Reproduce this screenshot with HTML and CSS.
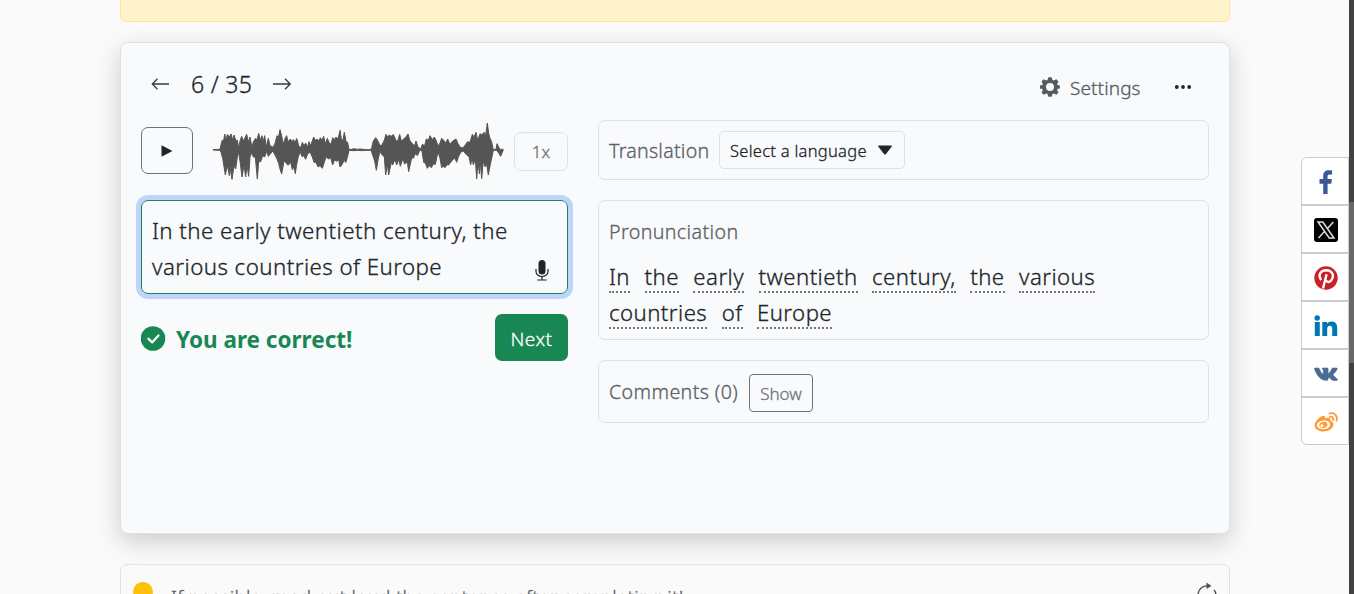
FILE: index.html
```
<!DOCTYPE html>
<html lang="en">
<head>
<meta charset="utf-8">
<title>Listening practice</title>
<link rel="stylesheet" href="styles.css">
</head>
<body>
<main class="page">
  <div class="alert"></div>
  <section class="card">
    <header class="toolbar">
      <nav class="pager">
        <svg class="arrow" width="20" height="14" viewBox="0 0 20 14"><path d="M19 7H2.500M7.500 1.800 2.300 7 7.500 12.200"/></svg>
        <span class="count">6 / 35</span>
        <svg class="arrow" width="20" height="14" viewBox="0 0 20 14"><path d="M0 7h17M12 1.800 17.200 7 12 12.200"/></svg>
      </nav>
      <div class="options">
        <svg width="20" height="20" viewBox="-10 -10 20 20"><path fill="#555a5f" fill-rule="evenodd" d="M-1.600-9.800h3.200l.9 2.800 1.200.5 2.600-1.300 2.200 2.200-1.300 2.600.5 1.200 2.200.2v3.200l-2.200.2-.5 1.200 1.300 2.600-2.200 2.200-2.600-1.300-1.200.5-.9 2.800h-3.200l-.9-2.800-1.200-.5-2.600 1.300-2.200-2.200 1.300-2.600-.5-1.200-2.800-.2v-3.200l2.800-.2.5-1.200-1.300-2.600 2.200-2.200 2.600 1.300 1.200-.5zM0-4A4 4 0 1 0 0 4 4 4 0 1 0 0-4z"/></svg>
        <span class="settings">Settings</span>
        <svg class="more" width="18" height="6" viewBox="0 0 18 6"><circle cx="2.800" cy="3" r="1.900"/><circle cx="9" cy="3" r="1.900"/><circle cx="15.200" cy="3" r="1.900"/></svg>
      </div>
    </header>
    <div class="columns">
      <div class="left">
        <div class="player">
          <button class="play"><svg width="12" height="12" viewBox="0 0 12 12"><path fill="#212529" d="M.5.3 11.500 6 .5 11.700z"/></svg></button>
          <svg class="wave" width="291" height="60" viewBox="249 18 873 180"><polygon fill="#555" stroke="#555" stroke-width="3" stroke-linejoin="bevel" points="249,104 270,103 274,85 277,75 281,78 284,57 289,75 292,58 298,66 303,57 308,75 312,60 318,78 322,75 326,100 330,78 335,64 340,78 345,68 350,58 355,80 360,66 366,98 370,80 377,70 381,75 386,55 391,75 396,62 400,80 404,62 409,96 415,70 420,92 430,97 436,82 441,62 445,68 450,44 455,62 460,88 466,68 470,62 474,80 481,72 486,80 490,74 496,82 500,70 506,92 512,98 517,82 522,92 527,84 533,96 537,80 541,92 547,78 551,66 556,76 561,72 566,78 571,68 576,76 581,64 586,86 592,70 597,82 603,88 608,68 613,74 618,66 624,72 630,46 634,72 639,76 643,52 648,80 653,82 657,104 665,103 672,101 680,103 690,102 700,103 705,104 722,104 725,98 730,78 737,68 743,76 750,92 756,90 763,75 768,58 773,66 778,60 784,64 790,58 796,72 802,82 809,58 814,78 821,72 828,66 834,57 840,78 847,86 854,92 858,78 864,96 872,102 877,88 884,92 889,72 895,76 900,62 907,74 913,66 919,78 924,94 930,84 935,70 941,76 947,84 953,72 960,88 968,78 978,72 984,86 992,98 1000,98 1007,88 1013,80 1020,82 1027,58 1032,66 1038,52 1043,76 1050,56 1056,60 1062,52 1067,60 1072,24 1076,55 1080,70 1084,78 1090,104 1098,103 1101,86 1107,98 1112,105 1117,102 1120,104 1117,112 1112,124 1106,114 1100,106 1090,106 1086,125 1081,148 1075,180 1070,148 1065,155 1060,138 1055,191 1051,142 1048,176 1044,138 1040,192 1036,132 1030,150 1026,128 1022,150 1017,125 1010,120 1000,108 992,112 985,126 980,142 975,130 968,134 962,142 956,150 951,149 945,158 940,154 935,158 930,130 924,110 916,148 910,147 904,158 898,152 892,160 886,144 881,142 876,108 870,105 862,122 856,116 850,130 845,128 836,170 832,140 824,147 818,132 811,154 806,134 800,150 795,133 788,150 784,142 776,180 772,148 767,180 763,126 755,118 750,109 745,130 739,166 734,138 728,120 723,106 705,106 695,107 685,106 670,107 657,106 653,124 647,143 643,134 636,149 630,156 626,134 620,139 614,134 608,150 602,128 595,132 588,125 583,142 577,160 570,152 564,156 558,142 552,142 547,126 540,112 533,116 527,133 521,122 516,125 511,110 505,125 500,148 496,176 491,155 487,164 482,142 474,151 468,143 462,138 455,177 450,162 446,145 440,130 434,118 428,108 415,124 410,109 404,126 398,122 392,140 386,140 382,192 376,127 370,126 365,113 360,126 356,184 351,150 347,186 342,150 336,186 330,138 326,112 322,126 317,162 312,152 306,193 300,155 298,182 292,150 286,180 282,155 278,130 273,112 270,106 249,105"/></svg>
          <button class="speed">1x</button>
        </div>
        <div class="answer">
          <div class="answer-text">In the early twentieth century, the<br>various countries of Europe</div>
          <svg class="mic" width="14" height="21" viewBox="0 0 14 21"><rect x="3.500" y="0" width="7" height="14.500" rx="3.500" fill="#212529"/><path d="M1 9v2.500a6 5 0 0 0 12 0V9M7 16.500v3M2.200 20h9.600" fill="none" stroke="#212529" stroke-width="1.200"/></svg>
        </div>
        <div class="result">
          <svg width="25" height="25" viewBox="0 0 25 25"><circle cx="12" cy="12.500" r="12.300" fill="#198754"/><path d="M7.500 12.800l3.800 3.500 6.200-6.800" fill="none" stroke="#fff" stroke-width="2.300" stroke-linecap="round" stroke-linejoin="round"/></svg>
          <strong class="correct">You are correct!</strong>
          <button class="next">Next</button>
        </div>
      </div>
      <div class="right">
        <div class="panel translation">
          <span class="label label-tr">Translation</span>
          <button class="select"><span>Select a language</span><svg width="14" height="10" viewBox="0 0 14 10"><path d="M1 .5h12q1.300.2.6 1.200L8 9Q7 10 6 9L.4 1.700Q-.3.7 1 .5z" fill="#212529"/></svg></button>
        </div>
        <div class="panel pronunciation">
          <div class="label label-pr">Pronunciation</div>
          <div class="words"><span class="w">In</span><span class="w">the</span><span class="w">early</span><span class="w">twentieth</span><span class="w">century,</span><span class="w">the</span><span class="w">various</span></div>
          <div class="words"><span class="w">countries</span><span class="w">of</span><span class="w">Europe</span></div>
        </div>
        <div class="panel comments">
          <span class="label label-co">Comments (0)</span>
          <button class="show">Show</button>
        </div>
      </div>
    </div>
  </section>
  <section class="tip">
    <svg width="20" height="26" viewBox="0 0 20 26"><path d="M10 0a9.800 9.800 0 0 1 6 17.500L14 21H6l-2-3.500A9.800 9.800 0 0 1 10 0zM6 22.500h8V25H6z" fill="#ffc107"/></svg>
    <span class="tip-text">If possible, read out loud the sentence after completing it!</span>
    <svg class="refresh" width="20" height="24" viewBox="0 0 20 24"><path d="M1 13A9 9 0 0 1 11.500 4M17 8a9 9 0 1 1-16 5" fill="none" stroke="#495057" stroke-width="1.400"/><path d="M9.500.5 14.500 4 9.500 7z" fill="#495057"/></svg>
  </section>
</main>
<aside class="share">
  <a class="share-link"><svg width="24" height="24" viewBox="0 0 24 24"><path fill="#3b5998" d="M9.200 24V13.800H5.500V9h3.700V5.900C9.200 2.200 11.400.2 14.700.2c1.600 0 3 .1 3.400.2v4.200h-2.300c-1.900 0-2.200.7-2.200 2V9h4.300l-.6 4.800h-3.700V24z"/></svg></a>
  <a class="share-link"><svg width="24" height="24" viewBox="0 0 24 24"><rect width="24" height="24" rx="3"/><path d="M4 4h4.800L20 20h-4.800zM19.300 4l-6.500 7.300M10.700 13.300 4.500 20" fill="none" stroke="#ddd" stroke-width="1.500"/></svg></a>
  <a class="share-link"><svg width="24" height="24" viewBox="0 0 24 24"><circle cx="12" cy="12" r="11.700" fill="#cb2027"/><path d="M7.300 14C3.200 8.800 7 4.300 12.300 4.300c4.500 0 7.200 3 6.600 6.600-.7 4.300-4.600 6.600-7 3.700M12.600 8.300 9 22.500" fill="none" stroke="#fff" stroke-width="2.400"/></svg></a>
  <a class="share-link"><svg width="24" height="24" viewBox="0 0 24 24" fill="#0077b5"><circle cx="3.200" cy="4" r="2.700"/><path d="M.8 8h5v14h-5zM8.300 8h4.700v1.900c.8-1.400 2.300-2.300 4.300-2.300 4.500 0 5.900 2.600 5.900 6.700V22h-5v-6.900c0-2-.4-3.300-2.300-3.300s-2.700 1.300-2.700 3.200v7H8.300z"/></svg></a>
  <a class="share-link"><svg width="24" height="24" viewBox="0 0 24 24"><path fill="#4c6c91" stroke="#4c6c91" stroke-width=".6" d="M13.100 18.300h-1.600C6.900 18.300 2.800 13.500.5 7c-.2-.6.100-1 .7-1h3.100c.5 0 .8.300 1 .7.900 2.500 2.500 5.200 3.600 5.200.9 0 .5-3.300.1-4.200-.3-.6-.9-.8-.9-1.200 0-.3.800-.5 2-.5h2.800c1.100 0 1.200.5 1.200 1.300v3.800c.1 1.200 1.700-.2 3.800-4.300.2-.5.500-.8 1-.8h3.400c1 0 1.100.6.700 1.400-1.400 2.700-4.100 4.800-4 5.600.1.800 3.100 2.500 4.400 4.400.3.600 0 1-.7 1h-3.600c-1.600 0-3.300-3-4.300-2.800-.6.100-.7.700-.7 1.300 0 .9-.2 1.400-1 1.400z"/></svg></a>
  <a class="share-link"><svg width="24" height="24" viewBox="0 0 24 24"><path fill="#ff9933" fill-rule="evenodd" d="M8.300 6c2.300-1 3.200.4 2.700 2.400 2.700-1.100 6.200-.9 5.500 2.400 6.300 2 2.300 10.700-6.900 10.700C4.800 21.500.7 19 .7 15.500.7 12 4.500 7.500 8.300 6zM9.500 10.500c-9 .9-8.200 9 .3 8.700 8.500-.5 8.600-9.400-.3-8.700z"/><path fill="#ff9933" fill-rule="evenodd" d="M9.500 11.700c-6 .8-5.400 7 .3 6.200 5.200-.9 4.700-7-.3-6.200zM8 14.200a1.600 1.500 0 1 1-.1 3 1.600 1.500 0 0 1 .1-3z"/><path d="M15.500 3.500C20.500 2 24 6 22.500 10.700M15.800 7c2.600-.8 4 .7 3.300 3.100" fill="none" stroke="#ff9933" stroke-width="1.800" stroke-linecap="round"/></svg></a>
</aside>
<div class="scrollbar"><div class="thumb"></div></div>
</body>
</html>
```
FILE: styles.css
```
* { box-sizing: border-box; }
body { margin: 0; height: 594px; overflow: hidden; background: #fafafa; color: #212529; font-family: "Noto Sans", "Open Sans", sans-serif; font-weight: 300; -webkit-text-stroke: .3px currentColor; display: flex; }
svg { display: block; flex: none; }
button { font: inherit; background: none; padding: 0; display: flex; align-items: center; justify-content: center; flex: none; }
.page { width: 1110px; height: 594px; overflow: hidden; padding: 0 30px; margin-left: 90px; box-sizing: content-box; flex: none; }
.alert { height: 22px; background: #fff3cd; border: 1px solid #ffe69c; border-top: 0; border-radius: 0 0 6px 6px; }
.card { margin-top: 20px; height: 492px; background: #f8fafc; border: 1px solid #dee2e6; border-radius: 8px; box-shadow: 0 8px 24px rgba(0,0,0,.18); padding: 0 20px; white-space: nowrap; }
.toolbar { height: 77px; display: flex; justify-content: space-between; }
.pager { display: flex; align-items: center; padding: 5px 0 0 9px; }
.arrow { fill: none; stroke: #343a40; stroke-width: 1.3; }
.count { font-size: 23px; width: 61px; margin: 0 21px 0 21px; letter-spacing: .3px; }
.options { display: flex; align-items: center; padding: 11px 17px 0 0; color: #555a5f; }
.more { fill: #212529; }
.settings { font-size: 19px; width: 71px; margin: 1px 33px 0 10px; letter-spacing: .1px; }
.columns { display: flex; gap: 30px; }
.left { width: 427px; }
.right { width: 611px; display: flex; flex-direction: column; gap: 20px; }
.player { display: flex; height: 60px; align-items: center; }
.play { width: 52px; height: 47px; border: 1px solid #6c757d; border-radius: 7px; margin-right: 20px; padding-top: 2px; }
.wave { margin-top: 2px; }
.speed { width: 54px; height: 39px; border: 1px solid #dee2e6; border-radius: 7px; margin: 3px 0 0 10px; color: #6f6f6f; font-size: 17px; }
.answer { margin-top: 20px; height: 94px; border: 1px solid #198754; border-radius: 7px; box-shadow: 0 0 0 5px #bcd6fb; padding: 12px 18px 12px 10px; display: flex; justify-content: space-between; align-items: flex-end; }
.answer-text { font-size: 22.300px; letter-spacing: .44px; line-height: 36px; height: 68px; width: 370px; }
.result { margin-top: 20px; height: 47px; display: flex; align-items: center; color: #198754; }
.result svg { margin-top: 2px; }
.correct { font-size: 22.500px; font-weight: 700; -webkit-text-stroke: 0; margin-left: 10px; padding-top: 3px; flex: 1; }
.next { width: 73px; height: 47px; border: 0; border-radius: 7px; background: #198754; color: #fff; font-size: 19px; letter-spacing: .5px; padding-top: 3px; }
.panel { border: 1px solid #dee2e6; border-radius: 7px; padding-left: 10px; }
.label { color: #5b6065; font-size: 19.600px; letter-spacing: .4px; }
.translation { height: 60px; display: flex; align-items: center; }
.select { margin-left: 10px; width: 186px; height: 38px; border: 1px solid #dee2e6; border-radius: 5px; font-size: 16.500px; letter-spacing: .28px; color: #212529; justify-content: space-between; padding: 0 12px 0 10px; }
.label-tr { width: 100px; letter-spacing: .25px; }
.pronunciation { height: 140px; padding-top: 15px; }
.label-pr { height: 45px; line-height: 32px; }
.words { display: flex; gap: 14.500px; height: 36px; font-size: 22.200px; letter-spacing: .44px; line-height: 31px; }
.w { height: 32px; border-bottom: 2px dotted #777; }
.comments { height: 63px; display: flex; align-items: center; }
.label-co { width: 130px; }
.show { margin: 2px 0 0 10px; width: 64px; height: 38px; border: 1px solid #6c757d; border-radius: 4px; color: #6c757d; font-size: 17px; padding-top: 2px; }
.tip { margin-top: 30px; height: 60px; border: 1px solid #dee2e6; border-radius: 7px; display: flex; align-items: flex-start; padding: 17px 12px 0; color: #5b6065; white-space: nowrap; }
.tip-text { font-size: 19px; letter-spacing: .24px; line-height: 30px; margin: 0 auto 0 18px; }
.share { position: fixed; left: 1301px; top: 157px; width: 48px; border: 1px solid #ccc; border-radius: 6px 0 0 6px; background: #fff; overflow: hidden; }
.share-link { display: flex; height: 48px; align-items: center; justify-content: center; border-bottom: 2px solid #ccc; padding: 2px 0 0 2px; }
.share-link:last-child { height: 46px; border: 0; }
.scrollbar { width: 5px; margin-left: auto; background: #424242; height: 594px; padding-top: 202px; flex: none; }
.thumb { height: 161px; background: #686868; }
```
